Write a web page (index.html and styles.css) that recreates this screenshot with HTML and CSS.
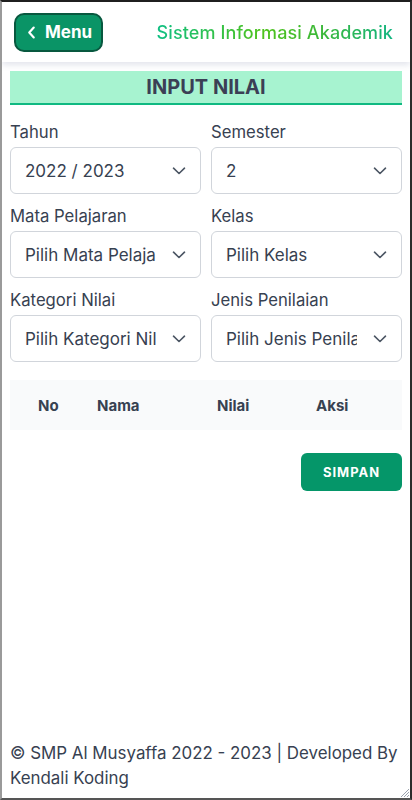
FILE: index.html
```html
<!DOCTYPE html>
<html lang="id">
<head>
<meta charset="utf-8">
<title>Input Nilai</title>
<link rel="stylesheet" href="styles.css">
</head>
<body>
<div class="frame">
  <header class="topbar">
    <a class="menu-btn" href="#"><svg class="back" viewBox="0 0 10 14" width="9" height="13"><path d="M7.5 1.5 L2.5 7 L7.5 12.5" fill="none" stroke="#fff" stroke-width="2.4" stroke-linecap="round" stroke-linejoin="round"/></svg>Menu</a>
    <span class="brand">Sistem Informasi Akademik</span>
  </header>
  <main class="content">
    <h1 class="banner">INPUT NILAI</h1>
    <div class="form-grid">
      <label class="field"><span class="label">Tahun</span><span class="select"><span class="val">2022 / 2023</span><svg class="chev" viewBox="0 0 14 8" width="14" height="8"><path d="M1.5 1.2 L7 6.5 L12.5 1.2" fill="none" stroke="#4b5563" stroke-width="1.6" stroke-linecap="round" stroke-linejoin="round"/></svg></span></label>
      <label class="field"><span class="label">Semester</span><span class="select"><span class="val">2</span><svg class="chev" viewBox="0 0 14 8" width="14" height="8"><path d="M1.5 1.2 L7 6.5 L12.5 1.2" fill="none" stroke="#4b5563" stroke-width="1.6" stroke-linecap="round" stroke-linejoin="round"/></svg></span></label>
      <label class="field"><span class="label">Mata Pelajaran</span><span class="select"><span class="val">Pilih Mata Pelajaran</span><svg class="chev" viewBox="0 0 14 8" width="14" height="8"><path d="M1.5 1.2 L7 6.5 L12.5 1.2" fill="none" stroke="#4b5563" stroke-width="1.6" stroke-linecap="round" stroke-linejoin="round"/></svg></span></label>
      <label class="field"><span class="label">Kelas</span><span class="select"><span class="val">Pilih Kelas</span><svg class="chev" viewBox="0 0 14 8" width="14" height="8"><path d="M1.5 1.2 L7 6.5 L12.5 1.2" fill="none" stroke="#4b5563" stroke-width="1.6" stroke-linecap="round" stroke-linejoin="round"/></svg></span></label>
      <label class="field"><span class="label">Kategori Nilai</span><span class="select"><span class="val">Pilih Kategori Nilai</span><svg class="chev" viewBox="0 0 14 8" width="14" height="8"><path d="M1.5 1.2 L7 6.5 L12.5 1.2" fill="none" stroke="#4b5563" stroke-width="1.6" stroke-linecap="round" stroke-linejoin="round"/></svg></span></label>
      <label class="field"><span class="label">Jenis Penilaian</span><span class="select"><span class="val">Pilih Jenis Penilaian</span><svg class="chev" viewBox="0 0 14 8" width="14" height="8"><path d="M1.5 1.2 L7 6.5 L12.5 1.2" fill="none" stroke="#4b5563" stroke-width="1.6" stroke-linecap="round" stroke-linejoin="round"/></svg></span></label>
    </div>
    <div class="table-head">
      <span class="c-no">No</span>
      <span class="c-nama">Nama</span>
      <span class="c-nilai">Nilai</span>
      <span class="c-aksi">Aksi</span>
    </div>
    <div class="actions">
      <button class="save" type="button">SIMPAN</button>
    </div>
  </main>
  <footer class="footer">© SMP Al Musyaffa 2022 - 2023 | Developed By Kendali Koding</footer>
  <svg class="grip" viewBox="0 0 12 12" width="12" height="12"><path d="M11 3 L3 11 M11 6 L6 11 M11 9 L9 11" stroke="#9ca3af" stroke-width="1" fill="none"/></svg>
</div>
</body>
</html>
```
FILE: styles.css
```css
* { box-sizing: border-box; }
html, body { margin: 0; padding: 0; }
body {
  font-family: Inter, "Noto Sans", sans-serif;
  color: #374151;
  background: #fff;
}
.frame {
  position: relative;
  width: 412px;
  height: 800px;
  display: flex;
  flex-direction: column;
  border-top: 2px solid #1f1f1f;
  border-left: 2px solid #9a9a9a;
  border-right: 2px solid #2b2b2b;
  border-bottom: 2px solid #555;
  overflow: hidden;
}
.topbar {
  height: 60px;
  display: flex;
  align-items: center;
  justify-content: space-between;
  padding: 0 17px 0 12px;
  background: #fff;
  box-shadow: 0 3px 6px rgba(100, 110, 150, 0.18);
  position: relative;
  z-index: 1;
}
.menu-btn {
  display: flex;
  align-items: center;
  gap: 9px;
  width: 89px;
  height: 39px;
  padding-left: 11px;
  background: #0a9466;
  border: 2px solid #08583f;
  border-radius: 10px;
  color: #fff;
  font-weight: 700;
  font-size: 17px;
  text-decoration: none;
}
.brand {
  font-size: 18px;
  font-weight: 500;
  letter-spacing: 0.1px;
  background: linear-gradient(90deg, #0fbf83 0%, #4fc31c 45%, #3cb83a 70%, #12b582 100%);
  -webkit-background-clip: text;
  background-clip: text;
  color: transparent;
}
.content {
  padding: 9px 8px 0;
}
.banner {
  margin: 0;
  height: 34px;
  background: #a7f3d0;
  border-bottom: 2px solid #10b981;
  text-align: center;
  font-size: 20px;
  font-weight: 700;
  line-height: 33px;
  color: #3b3f55;
}
.form-grid {
  display: grid;
  grid-template-columns: minmax(0, 1fr) minmax(0, 1fr);
  column-gap: 10px;
  row-gap: 12px;
  margin-top: 17px;
}
.field { display: flex; flex-direction: column; min-width: 0; }
.label {
  font-size: 16.7px;
  line-height: 20px;
  margin-bottom: 5px;
}
.select {
  display: flex;
  align-items: center;
  height: 47px;
  border: 1px solid #d1d5db;
  border-radius: 6px;
  padding: 0 14px;
  font-size: 17px;
  color: #374151;
  min-width: 0;
}
.val {
  flex: 1;
  min-width: 0;
  white-space: nowrap;
  overflow: hidden;
  margin-right: 16px;
}
.chev { flex: none; }
.table-head {
  margin-top: 18px;
  height: 50px;
  background: #f9fafb;
  display: flex;
  align-items: center;
  font-weight: 700;
  font-size: 15px;
  color: #374151;
}
.c-no { width: 87px; padding-left: 28px; }
.c-nama { width: 120px; }
.c-nilai { width: 99px; }
.actions {
  display: flex;
  justify-content: flex-end;
  margin-top: 23px;
}
.save {
  width: 101px;
  height: 38px;
  background: #059669;
  border: none;
  border-radius: 6px;
  color: #fff;
  font-family: inherit;
  font-weight: 700;
  font-size: 13px;
  letter-spacing: 1px;
}
.footer {
  margin-top: auto;
  padding: 0 8px 7px;
  font-size: 16.9px;
  line-height: 25px;
  color: #374151;
}
.grip {
  position: absolute;
  right: 0;
  bottom: 0;
}
```
